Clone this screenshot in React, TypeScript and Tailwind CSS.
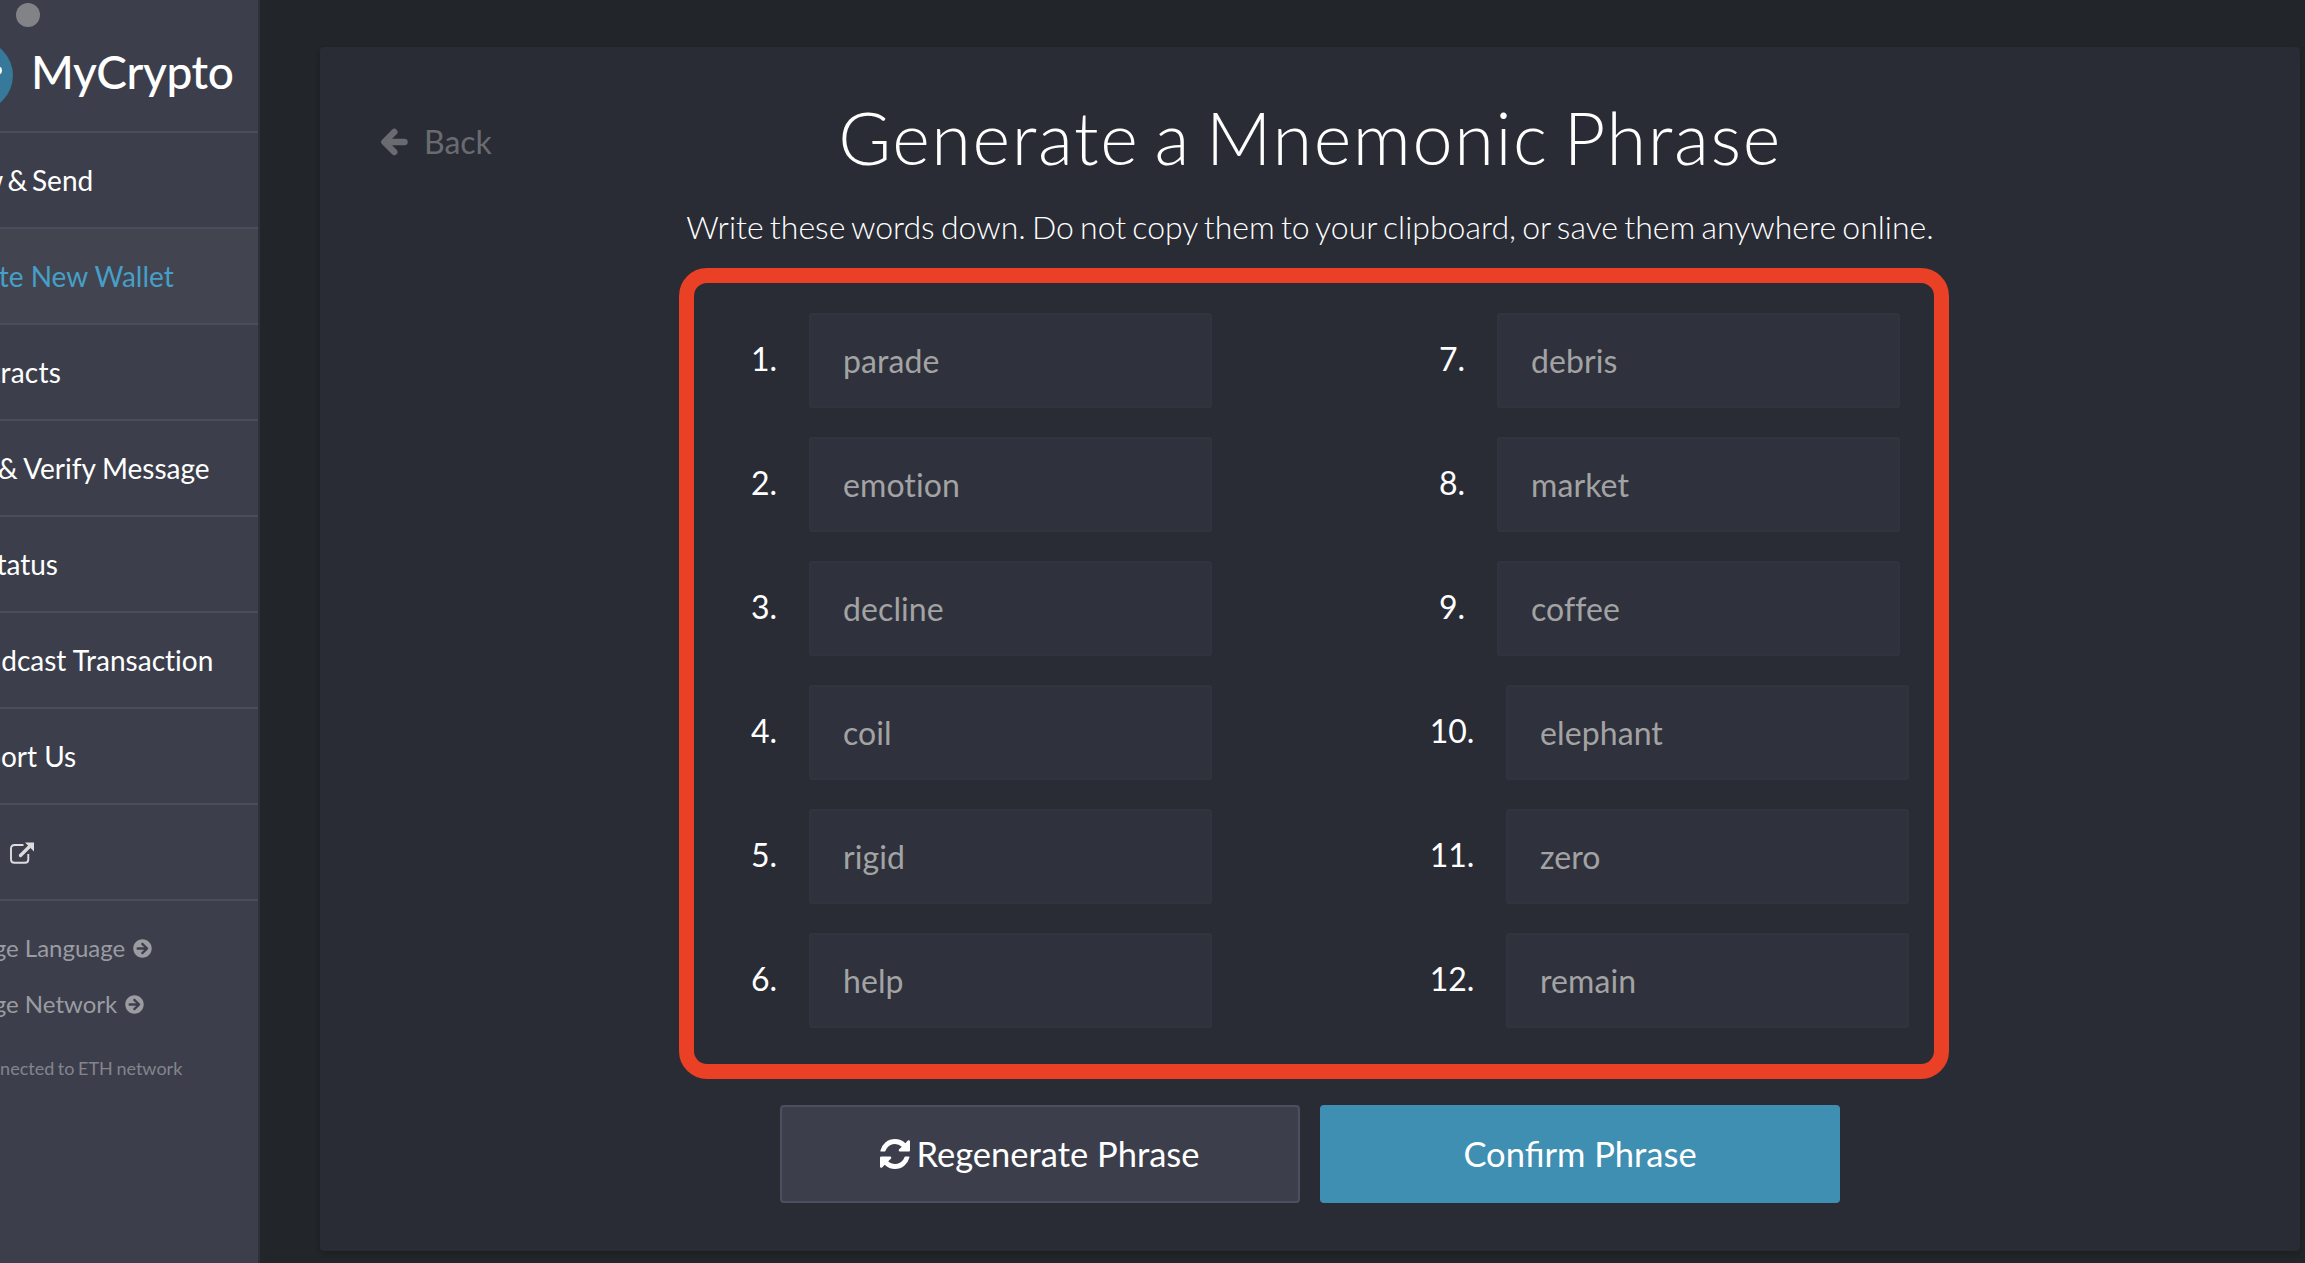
import React from "react";
import { FaArrowCircleRight } from "react-icons/fa";

const navItems = [
  { label: "View & Send", spacing: "-ml-[59px] [word-spacing:-2.500px]" },
  { label: "Create New Wallet", spacing: "-ml-[58px]", active: true },
  { label: "Contracts", spacing: "-ml-[60px] tracking-[0.200px]" },
  { label: "Sign & Verify Message", spacing: "-ml-[61px] [word-spacing:-0.500px]" },
  { label: "TX Status", spacing: "-ml-[60px]" },
  { label: "Broadcast Transaction", spacing: "-ml-[56px]" },
  { label: "Support Us", spacing: "-ml-[61px]" },
];

const leftWords = ["parade", "emotion", "decline", "coil", "rigid", "help"];
const rightWords = ["debris", "market", "coffee", "elephant", "zero", "remain"];

function BackArrow() {
  return (
    <svg width="28" height="28" viewBox="0 0 28 28" fill="none" stroke="currentColor" strokeLinecap="round" strokeLinejoin="round">
      <path d="M14.3 4 L4.4 14 L14.3 24" strokeWidth="6.4" />
      <path d="M6 14 H24.4" strokeWidth="6.6" />
    </svg>
  );
}

function RefreshIcon() {
  return (
    <svg width="30" height="30" viewBox="0 128 1536 1536" fill="currentColor">
      <path d="M1511 1056q0 5-1 7-64 268-268 434.500t-478 166.500q-146 0-282.500-55t-243.500-157l-129 129q-19 19-45 19t-45-19-19-45v-448q0-26 19-45t45-19h448q26 0 45 19t19 45-19 45l-137 137q71 66 161 102t187 36q134 0 250-65t186-179q11-17 53-117 8-23 30-23h192q13 0 22.500 9.500t9.500 22.500zm25-800v448q0 26-19 45t-45 19h-448q-26 0-45-19t-19-45 19-45l138-138q-148-137-349-137-134 0-250 65t-186 179q-11 17-53 117-8 23-30 23h-199q-13 0-22.500-9.500t-9.500-22.500v-7q65-268 270-434.500t480-166.500q146 0 284 55.500t245 156.500l130-129q19-19 45-19t45 19 19 45z" />
    </svg>
  );
}

function ExternalIcon() {
  return (
    <svg width="24" height="22" viewBox="0 0 24 22" fill="none" stroke="#dcdcde">
      <path d="M13.500 3 H4.500 Q1 3 1 6.500 V17.500 Q1 20.800 4.500 20.800 H15 Q18.300 20.800 18.300 17.500 V12" strokeWidth="1.900" />
      <path d="M10.500 13.500 L19 5" strokeWidth="3.200" strokeLinecap="round" />
      <path d="M15 0.500 H24 V9.500 Z" fill="#dcdcde" stroke="none" />
    </svg>
  );
}

function Word({ n, word }: { n: number; word: string }) {
  const wide = n >= 10;
  return (
    <div className="flex h-[95px] items-center">
      <div className="w-[60px] pb-1 text-center text-[32px] leading-none text-white">{n}.</div>
      <div
        className={`flex h-[95px] w-[403px] items-center rounded-[3px] border-2 border-[#31343e] bg-[#2f323d] pl-8 text-[32px] tracking-[0.100px] text-[#a3a3a4] [font-variant-ligatures:none] ${
          wide ? "ml-6" : "ml-[15px]"
        }`}
      >
        {word}
      </div>
    </div>
  );
}

export default function App() {
  return (
    <div className="flex h-[1263px] w-[2305px] overflow-hidden bg-[#222529] font-['Lato',sans-serif]">
      <aside className="relative h-full w-[260px] shrink-0 overflow-hidden border-r-2 border-[#2e313a] bg-[#3c3f4b] whitespace-nowrap">
        <div className="absolute top-[3px] left-4 size-6 rounded-full bg-[#828387]" />
        <header className="flex h-[133px] items-center border-b-2 border-[#4b4e5a] pt-[19px]">
          <svg className="-ml-[58px] shrink-0" width="71" height="71" viewBox="0 0 71 71">
            <circle cx="35.500" cy="35.500" r="35.500" fill="#36799a" />
            <path d="M36 30.500 H56" stroke="#fff" strokeWidth="8" strokeLinecap="round" />
          </svg>
          <span className="mb-1.5 ml-[18px] text-[46px] leading-none font-medium tracking-[-0.400px] text-white">MyCrypto</span>
        </header>
        <nav>
          {navItems.map((item) => (
            <div
              key={item.label}
              className={`flex h-24 items-center border-b-2 border-[#4b4e5a] text-[28px] ${
                item.active ? "bg-[#424550] text-[#469fc8]" : "text-white"
              }`}
            >
              <span className={`[font-variant-ligatures:none] ${item.spacing}`}>{item.label}</span>
            </div>
          ))}
          <div className="flex h-24 items-center border-b-2 border-[#4b4e5a] pt-px text-[28px] text-white">
            <span className="-ml-[58px] w-[68px]">Help</span>
            <ExternalIcon />
          </div>
        </nav>
        <div className="-ml-[61px] flex flex-col text-[24px] text-[#9a9ca2]">
          <div className="mt-[19px] flex h-14 items-center gap-2">
            Change Language <FaArrowCircleRight size={19} />
          </div>
          <div className="flex h-14 items-center gap-2">
            Change Network <FaArrowCircleRight size={19} />
          </div>
        </div>
        <div className="mt-[23px] ml-[-32px] text-[18px] text-[#83858d] [word-spacing:-1px]">Connected to ETH network</div>
      </aside>

      <main className="mt-[47px] ml-[60px] h-[1204px] w-[1980px] rounded bg-[#292c35] shadow-[0_3px_6px_rgba(0,0,0,0.2)]">
        <div className="grid h-[180px] grid-cols-[360px_1fr_360px]">
          <button className="ml-[60px] flex h-[190px] items-center gap-4 self-start text-[32px] text-[#696b71]">
            <BackArrow />
            <span>Back</span>
          </button>
          <div className="text-center text-white">
            <h1 className="mt-[45px] text-[72px] leading-[90px] font-light tracking-[1.600px] [word-spacing:-6px]">
              Generate a Mnemonic Phrase
            </h1>
            <p className="mt-[25px] text-[32px] leading-[40px] font-light whitespace-nowrap [word-spacing:-2.500px]">
              Write these words down. Do not copy them to your clipboard, or save them anywhere online.
            </p>
          </div>
        </div>

        <section className="mt-[41px] ml-[359px] flex h-[811px] w-[1270px] rounded-[28px] border-[15px] border-[#e94026] pt-[30px]">
          <div className="flex w-[688px] flex-col gap-[29px] pl-10">
            {leftWords.map((w, i) => (
              <Word key={w} n={i + 1} word={w} />
            ))}
          </div>
          <div className="flex flex-col gap-[29px] pl-10">
            {rightWords.map((w, i) => (
              <Word key={w} n={i + 7} word={w} />
            ))}
          </div>
        </section>

        <div className="mt-[26px] ml-[460px] flex gap-5 text-[34.500px] text-white">
          <button className="flex h-[98px] w-[520px] items-center justify-center gap-1.5 rounded-[4px] border-2 border-[#4c505e] bg-[#3c3f4b]">
            <RefreshIcon />
            <span>Regenerate Phrase</span>
          </button>
          <button className="flex h-[98px] w-[520px] items-center justify-center rounded-[4px] bg-[#3f8fb3]">
            Confirm Phrase
          </button>
        </div>
      </main>
    </div>
  );
}
